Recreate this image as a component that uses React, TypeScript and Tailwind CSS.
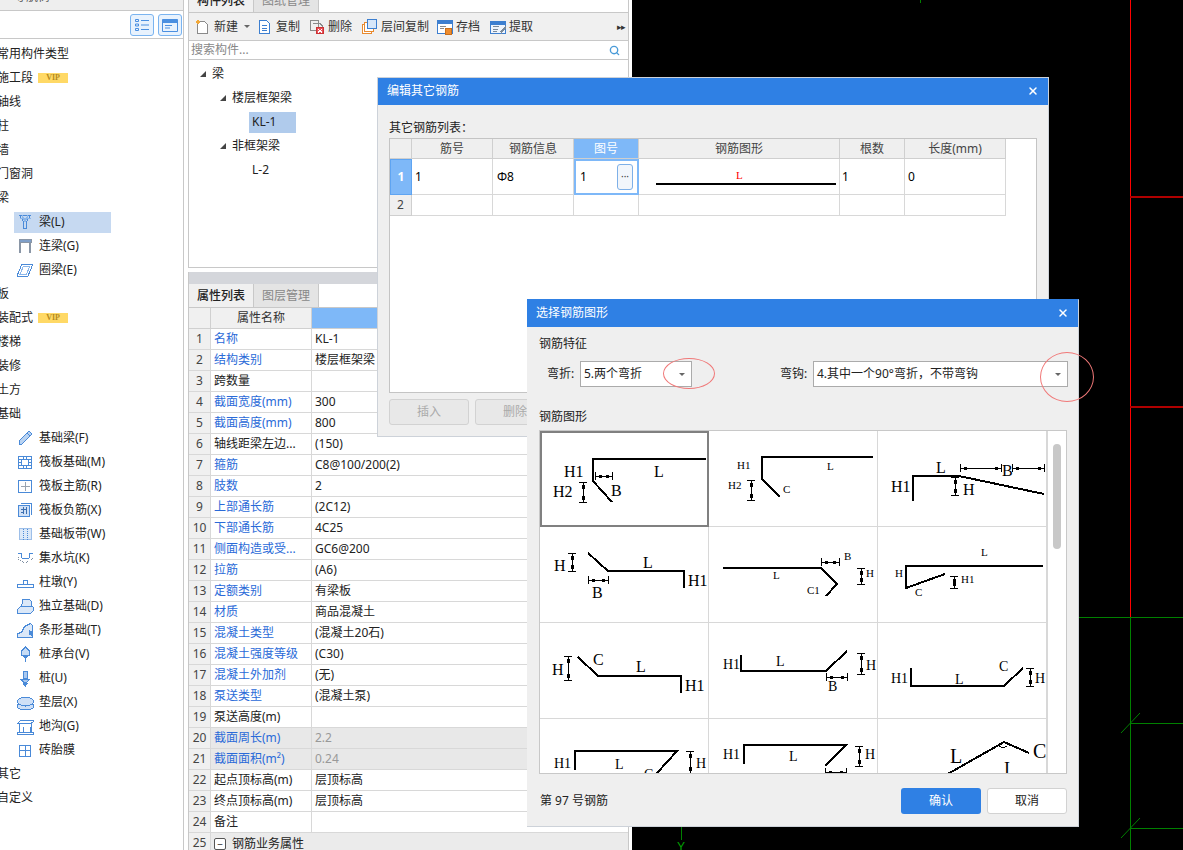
import type { ReactNode } from "react";
import { Search, X } from "lucide-react";

const blue = "#4a8ad8";

// small hand drawn icons for the nav tree
const navIcons: Record<string, ReactNode> = {
  beam: (
    <g fill="none" stroke={blue}>
      <path d="M2.5 1.5h11l-4 6v7h-3v-7z" />
      <path d="M5 1.5l3 6 3-6M2.5 4h11" stroke="#8ab6ea" />
    </g>
  ),
  link: (
    <g fill="none">
      <path d="M2 1h12v3H2z" fill="#7f9fc9" stroke="#8a96a6" />
      <path d="M3 4v11M13 4v11" stroke="#8a96a6" strokeWidth="2" />
    </g>
  ),
  ring: (
    <g fill="none" stroke={blue}>
      <path d="M5 2h11l-5 12H0z" />
      <path d="M6.5 4h6.5l-3.5 8H3z" stroke="#8ab6ea" />
    </g>
  ),
  fbeam: (
    <g fill="#b9d3f2" stroke={blue}>
      <path d="M12 1l3 3-10 10H2v-3z" />
      <path d="M10 3l3 3" />
    </g>
  ),
  raft: (
    <g fill="none" stroke={blue}>
      <path d="M1.5 2.5h13v12h-13z" />
      <path d="M4.5 5.5h7v6h-7z" />
      <path d="M1.5 5.5h3M1.5 8.5h3M1.5 11.5h3M11.5 5.5h3M11.5 8.5h3M11.5 11.5h3M6.5 2.5v3M9.5 2.5v3M6.5 11.5v3M9.5 11.5v3" />
    </g>
  ),
  main: (
    <g fill="none">
      <path d="M1.5 2.5h13v12h-13z" stroke={blue} />
      <path d="M8.5 4v9M4 8.5h9" stroke="#9aa4b0" />
    </g>
  ),
  neg: (
    <g fill="none" stroke={blue}>
      <path d="M3.5 1.5h11v11" />
      <path d="M1.5 3.5h11v11h-11z" fill="#cfe0f6" />
      <path d="M4 7h6M6 5v7M9 5v7M4 10h2" stroke="#3c6fb0" />
    </g>
  ),
  strip: (
    <g fill="#dbe8f8" stroke="#9dbfe9">
      <path d="M2.5 2.5h12v11h-12z" />
      <path d="M6.5 2.5v11M10.5 2.5v11" strokeDasharray="1 1" stroke={blue} />
    </g>
  ),
  pit: (
    <g fill="none" stroke={blue}>
      <path d="M1 3h3l1 5h7l1-5h3" />
      <path d="M1 7c1 7 13 7 15 0" strokeDasharray="1 1" stroke="#7f8fa3" />
    </g>
  ),
  pier: (
    <g fill="none" stroke={blue}>
      <path d="M.5 10.5h16v3H.5z" />
      <path d="M6.5 10.5v-4h4v4" />
    </g>
  ),
  ind: (
    <g fill="#dbe8f8" stroke={blue}>
      <path d="M5.5 1.5h7l2 2v7h-10z" />
      <path d="M.5 11.5l3-3h12l1 1v3l-3 3H.5z" />
    </g>
  ),
  bar: (
    <g fill="#dbe8f8" stroke={blue}>
      <path d="M.5 15.5v-4l4-1 3-6 6-3 2 2v12z" />
      <path d="M12 8l3.5 3v3L12 12z" fill={blue} />
    </g>
  ),
  cap: (
    <g fill="#c7dcf5" stroke={blue}>
      <path d="M8.5 1l4 4v4h-8V5z" />
      <path d="M8.5 9v7M5 9l3.5 3L12 9" fill="none" />
    </g>
  ),
  pile: (
    <g fill="#a9c8ef" stroke={blue}>
      <path d="M6 1.5h4.5v7H6z" />
      <path d="M3.5 9h9.5L10 12H6.5z" />
      <path d="M6 13h4.5l-2.2 3z" fill={blue} />
    </g>
  ),
  pad: (
    <g fill="#cfe0f6" stroke={blue}>
      <path d="M.5 10.5v3c2 3 14 3 16 0v-3z" />
      <ellipse cx="8.5" cy="7.5" rx="8" ry="4.5" />
    </g>
  ),
  ditch: (
    <g fill="none" stroke={blue}>
      <path d="M.5 14.5h16v2H.5z" />
      <path d="M2.5 14.5v-9h12v9M6 14.5v-6M13 14.5v-6" />
      <path d="M.5 5.5l3-3h13v1l-3 2z" />
    </g>
  ),
  brick: (
    <g fill="none" stroke={blue}>
      <path d="M2.5 3.5h11v11h-11z" />
      <path d="M8 3.5v11M2.5 8.5h11" />
    </g>
  ),
};

function Vip() {
  return (
    <span className="ml-[5px] flex h-[10px] w-[30px] items-center justify-center bg-[#ffd966] text-[8px] font-bold text-[#b58a1e] [font-family:'Liberation_Serif',serif]">
      VIP
    </span>
  );
}

const navRows: { label: string; icon?: string; vip?: boolean; active?: boolean }[] = [
  { label: "常用构件类型" },
  { label: "施工段", vip: true },
  { label: "轴线" },
  { label: "柱" },
  { label: "墙" },
  { label: "门窗洞" },
  { label: "梁" },
  { label: "梁(L)", icon: "beam", active: true },
  { label: "连梁(G)", icon: "link" },
  { label: "圈梁(E)", icon: "ring" },
  { label: "板" },
  { label: "装配式", vip: true },
  { label: "楼梯" },
  { label: "装修" },
  { label: "土方" },
  { label: "基础" },
  { label: "基础梁(F)", icon: "fbeam" },
  { label: "筏板基础(M)", icon: "raft" },
  { label: "筏板主筋(R)", icon: "main" },
  { label: "筏板负筋(X)", icon: "neg" },
  { label: "基础板带(W)", icon: "strip" },
  { label: "集水坑(K)", icon: "pit" },
  { label: "柱墩(Y)", icon: "pier" },
  { label: "独立基础(D)", icon: "ind" },
  { label: "条形基础(T)", icon: "bar" },
  { label: "桩承台(V)", icon: "cap" },
  { label: "桩(U)", icon: "pile" },
  { label: "垫层(X)", icon: "pad" },
  { label: "地沟(G)", icon: "ditch" },
  { label: "砖胎膜", icon: "brick" },
  { label: "其它" },
  { label: "自定义" },
];

const props: { label: string; value?: string; link?: boolean; calc?: boolean }[] = [
  { label: "名称", value: "KL-1", link: true },
  { label: "结构类别", value: "楼层框架梁", link: true },
  { label: "跨数量" },
  { label: "截面宽度(mm)", value: "300", link: true },
  { label: "截面高度(mm)", value: "800", link: true },
  { label: "轴线距梁左边...", value: "(150)" },
  { label: "箍筋", value: "C8@100/200(2)", link: true },
  { label: "肢数", value: "2", link: true },
  { label: "上部通长筋", value: "(2C12)", link: true },
  { label: "下部通长筋", value: "4C25", link: true },
  { label: "侧面构造或受...", value: "GC6@200", link: true },
  { label: "拉筋", value: "(A6)", link: true },
  { label: "定额类别", value: "有梁板", link: true },
  { label: "材质", value: "商品混凝土", link: true },
  { label: "混凝土类型", value: "(混凝土20石)", link: true },
  { label: "混凝土强度等级", value: "(C30)", link: true },
  { label: "混凝土外加剂", value: "(无)", link: true },
  { label: "泵送类型", value: "(混凝土泵)", link: true },
  { label: "泵送高度(m)" },
  { label: "截面周长(m)", value: "2.2", link: true, calc: true },
  { label: "截面面积(m²)", value: "0.24", link: true, calc: true },
  { label: "起点顶标高(m)", value: "层顶标高" },
  { label: "终点顶标高(m)", value: "层顶标高" },
  { label: "备注" },
];

const toolbar: { label: string; icon: ReactNode; w: number }[] = [
  {
    label: "复制",
    w: 52,
    icon: (
      <g fill="#fff" stroke="#3d7fd0">
        <path d="M2.5 1.5h7l3 3v10h-10z" />
        <path d="M5 6.5h5M5 9h5M5 11.5h5" />
      </g>
    ),
  },
  {
    label: "删除",
    w: 53,
    icon: (
      <g fill="none">
        <path d="M1.5 1.5h8v10h-8z" stroke="#8a8a8a" />
        <path d="M4 4.5h7l2 2v3" stroke="#8a8a8a" />
        <path d="M7.5 8.5h7v6h-7z" fill="#e8505a" stroke="#c33" />
        <path d="M9 10l4 3.5M13 10l-4 3.5" stroke="#fff" />
      </g>
    ),
  },
  {
    label: "层间复制",
    w: 75,
    icon: (
      <g fill="#fff">
        <path d="M.5 5.5h9v9h-9z" stroke="#e98a2e" />
        <path d="M2.5 3.5h9v9h-9z" stroke="#e98a2e" />
        <path d="M5.5.5h9v9h-9z" fill="#d7e7f9" stroke="#3d7fd0" />
      </g>
    ),
  },
  {
    label: "存档",
    w: 53,
    icon: (
      <g fill="#fff">
        <path d="M.5 1.5h15v13H.5z" stroke="#3d7fd0" />
        <path d="M.5 1.5h15v3H.5z" fill="#3d7fd0" stroke="#3d7fd0" />
        <path d="M3 7h6M3 9.5h4" stroke="#8a8a8a" />
        <path d="M8.5 9.5h6v6h-6z" fill="#ee8c2e" stroke="#c86f1c" />
      </g>
    ),
  },
  {
    label: "提取",
    w: 50,
    icon: (
      <g fill="#eef4fc">
        <path d="M.5 2.5h15v12H.5z" stroke="#3d7fd0" />
        <path d="M.5 2.5h15v2.5H.5z" fill="#3d7fd0" stroke="#3d7fd0" />
        <path d="M3 7.5h6M3 10h5M3 12.5h4" stroke="#7a8a9a" />
        <path d="M10 13l6-7 1.5 1.5-6 7z" fill="#7a8a9a" />
      </g>
    ),
  },
];

type Shape = {
  line: string;
  texts: [string, number, number, number][];
  v?: [number, number, number][];
  h?: [number, number, number][];
  extra?: ReactNode;
};

// coordinates are relative to one cell of the picker grid
const shapes: Shape[] = [
  {
    line: "165,27 52,27 52,49 71,70",
    texts: [["H1", 23, 45, 16], ["L", 113, 45, 16], ["B", 70, 64, 16], ["H2", 12, 65, 16]],
    v: [[42, 50, 70]],
    h: [[44, 54, 71]],
  },
  {
    line: "164,26 53,26 53,48 71,66",
    texts: [["H1", 28, 38, 11], ["H2", 19, 58, 11], ["C", 74, 62, 11], ["L", 118, 39, 11]],
    v: [[42, 49, 69]],
  },
  {
    line: "35,70 35,45 81,45 166,63",
    texts: [["H1", 13, 61, 16], ["L", 58, 42, 16], ["B", 124, 45, 16], ["H", 85, 64, 16]],
    v: [[77, 46, 64]],
    h: [[37, 82, 123], [37, 134, 166]],
  },
  {
    line: "48,26 68,44 144,44 144,61",
    texts: [["H1", 148, 59, 16], ["L", 103, 41, 16], ["H", 14, 44, 16], ["B", 52, 71, 16]],
    v: [[32, 26, 44]],
    h: [[53, 48, 68]],
  },
  {
    line: "14,41 112,41 128,57 117,69",
    texts: [["L", 64, 52, 11], ["C1", 98, 67, 11], ["B", 135, 33, 11], ["H", 157, 50, 11]],
    v: [[152, 41, 57]],
    h: [[35, 112, 130]],
  },
  {
    line: "165,39 28,39 28,61 67,47",
    texts: [["L", 103, 29, 11], ["H", 17, 50, 11], ["C", 37, 69, 11], ["H1", 83, 56, 11]],
    v: [[76, 49, 61]],
  },
  {
    line: "38,34 58,53 141,53 141,70",
    texts: [["H", 12, 52, 16], ["C", 53, 42, 16], ["L", 96, 49, 16], ["H1", 145, 68, 16]],
    v: [[28, 33, 57]],
  },
  {
    line: "32,32 32,48 117,48 138,28",
    texts: [["H1", 14, 46, 14], ["L", 67, 43, 14], ["B", 119, 68, 14], ["H", 157, 47, 14]],
    v: [[152, 30, 51]],
    h: [[54, 117, 138]],
  },
  {
    line: "33,45 33,63 126,63 145,45",
    texts: [["H1", 13, 60, 14], ["L", 77, 61, 14], ["C", 121, 48, 14], ["H", 157, 60, 14]],
    v: [[152, 45, 63]],
  },
  {
    line: "35,51 35,32 137,32 117,54",
    texts: [["H1", 14, 49, 14], ["L", 75, 50, 14], ["C", 104, 60, 14], ["H", 156, 49, 14]],
    v: [[150, 32, 54]],
  },
  {
    line: "35,45 35,26 137,26 116,47",
    texts: [["H1", 14, 40, 14], ["L", 80, 42, 14], ["H", 156, 40, 14]],
    v: [[150, 27, 47]],
    h: [[53, 116, 137]],
  },
  {
    line: "68,56 126,23 151,34",
    texts: [["L", 72, 44, 20], ["C", 155, 39, 20], ["I", 126, 56, 18]],
    extra: <path d="M120 26c2 3 6 3 9 1" fill="none" stroke="#000" />,
  },
];

function ShapeCell({ shape }: { shape: Shape }) {
  return (
    <svg width="168" height="95" className="block" shapeRendering="crispEdges">
      <polyline points={shape.line} fill="none" stroke="#000" strokeWidth="2" />
      {shape.v?.map(([x, a, b]) => (
        <g key={`v${x}${a}`} stroke="#000">
          <path d={`M${x} ${a}V${b}M${x - 4} ${a}h8M${x - 4} ${b}h8`} fill="none" />
          <rect x={x - 1} y={a + 3} width="2" height="3" fill="#000" />
          <rect x={x - 1} y={b - 6} width="2" height="3" fill="#000" />
        </g>
      ))}
      {shape.h?.map(([y, a, b]) => (
        <g key={`h${y}${a}`} stroke="#000">
          <path d={`M${a} ${y}H${b}M${a} ${y - 4}v8M${b} ${y - 4}v8`} fill="none" />
          <rect x={a + 4} y={y - 1} width="2" height="2" fill="#000" />
          <rect x={b - 6} y={y - 1} width="2" height="2" fill="#000" />
        </g>
      ))}
      {shape.extra}
      {shape.texts.map(([t, x, y, size]) => (
        <text key={t + x} x={x} y={y} fontSize={size} fontFamily="'Liberation Serif', serif" fill="#000">
          {t}
        </text>
      ))}
    </svg>
  );
}

function TitleBar({ title }: { title: string }) {
  return (
    <div className="flex h-[27px] shrink-0 items-center justify-between bg-[#2f80e4] pb-[2px] pl-[9px] pr-[9px] text-white">
      <span>{title}</span>
      <X size={12} strokeWidth={3} />
    </div>
  );
}

function Caret() {
  return <span className="h-0 w-0 border-x-[3px] border-t-[3px] border-x-transparent border-t-[#666]" />;
}

function TreeArrow() {
  return (
    <svg width="6" height="6" className="shrink-0">
      <path d="M6 0v6H0z" fill="#444" />
    </svg>
  );
}

const rebarCols = "grid-cols-[22px_81px_81px_65px_201px_65px_101px]";

function EditRebarDialog() {
  const heads = ["筋号", "钢筋信息", "图号", "钢筋图形", "根数", "长度(mm)"];
  return (
    <div className="absolute left-[377px] top-[77px] flex h-[360px] w-[672px] flex-col border border-[#cdd2d9] bg-[#efefef]">
      <TitleBar title="编辑其它钢筋" />
      <div className="flex h-[33px] shrink-0 items-center pl-[11px] pt-[13px] text-[#222]">其它钢筋列表：</div>
      <div className="mx-[11px] h-[255px] border border-[#c4c4c4] bg-white">
        <div className={`grid w-[617px] ${rebarCols} grid-rows-[20px_36px_21px]`}>
          <div className="border-b border-r border-[#cfcfcf] bg-[#efefef]" />
          {heads.map((h, i) => (
            <div
              key={h}
              className={`flex items-center justify-center border-b border-r border-[#cfcfcf] ${i === 2 ? "bg-[#7eb8f8] text-white" : "bg-[#efefef] text-[#444]"}`}
            >
              {h}
            </div>
          ))}
          <div className="flex items-center justify-center border border-[#5ea4f2] bg-[#7eb8f8] font-bold text-white">1</div>
          <div className="flex items-center border-b border-r border-[#d8d8d8] pl-[3px]">1</div>
          <div className="flex items-center border-b border-r border-[#d8d8d8] pl-[4px]">Φ8</div>
          <div className="flex items-center justify-between border-2 border-[#7eb8f8] pl-[4px] pr-[4px]">
            <span>1</span>
            <span className="flex h-[26px] w-[16px] items-center justify-center rounded-[3px] border border-[#7eb0e8] bg-[#f2f6fb] pb-[2px] text-[10px] leading-none text-[#444]">
              ···
            </span>
          </div>
          <div className="relative flex items-center justify-center border-b border-r border-[#d8d8d8]">
            <svg width="201" height="36" className="block">
              <text x="97" y="20" fontSize="11" fill="#f00" fontFamily="'Liberation Serif', serif">
                L
              </text>
              <path d="M17 25H197" stroke="#000" strokeWidth="2" shapeRendering="crispEdges" />
            </svg>
          </div>
          <div className="flex items-center border-b border-r border-[#d8d8d8] pl-[2px]">1</div>
          <div className="flex items-center border-b border-r border-[#d8d8d8] pl-[3px]">0</div>
          <div className="flex items-center justify-center border-b border-r border-[#cfcfcf] bg-[#efefef] text-[#444]">2</div>
          {heads.map((h) => (
            <div key={h} className="border-b border-r border-[#d8d8d8]" />
          ))}
        </div>
      </div>
      <div className="flex gap-[6px] pl-[11px] pt-[6px]">
        {["插入", "删除"].map((b) => (
          <div key={b} className="flex h-[26px] w-[80px] items-center justify-center rounded-[3px] border border-[#d2d2d2] bg-[#e8e8e8] text-[#aaa]">
            {b}
          </div>
        ))}
      </div>
    </div>
  );
}

function Select({ value, width }: { value: string; width: number }) {
  return (
    <div
      className="flex h-[26px] items-center justify-between border border-[#ababab] bg-white pl-[3px] pr-[6px] text-[#222]"
      style={{ width }}
    >
      <span>{value}</span>
      <Caret />
    </div>
  );
}

function ShapeDialog() {
  return (
    <div className="absolute left-[527px] top-[299px] flex h-[528px] w-[552px] flex-col border-b border-r border-t border-[#cdd2d9] border-t-[#2f80e4] bg-[#efefef]">
      <TitleBar title="选择钢筋图形" />
      <div className="pl-[12px] pt-[8px] text-[#222] leading-[18px]">钢筋特征</div>
      <div className="mt-[8px] flex items-center pl-[20px] text-[#222]">
        <span className="w-[33px] whitespace-nowrap">弯折:</span>
        <Select value="5.两个弯折" width={112} />
        <span className="ml-[88px] w-[33px] whitespace-nowrap">弯钩:</span>
        <Select value="4.其中一个90°弯折，不带弯钩" width={255} />
      </div>
      <div className="mt-[21px] pl-[12px] text-[#222] leading-[18px]">钢筋图形</div>
      <div className="ml-[12px] mt-[4px] flex h-[344px] w-[528px] overflow-hidden border border-[#c8c8c8] bg-white">
        <div className="grid w-[507px] grid-cols-3 content-start">
          {shapes.map((s, i) => (
            <div
              key={s.line}
              className={`h-[96px] ${i === 0 ? "border-2 border-[#808080]" : "border-b border-r border-[#d8d8d8]"}`}
            >
              <div className={i === 0 ? "-m-[1px]" : ""}>
                <ShapeCell shape={s} />
              </div>
            </div>
          ))}
        </div>
        <div className="flex flex-1 justify-center border-l border-[#d8d8d8] pt-[13px]">
          <div className="h-[105px] w-[8px] rounded-[4px] bg-[#c8c8c8]" />
        </div>
      </div>
      <div className="flex items-center justify-between pl-[13px] pr-[11px] pt-[14px] text-[#222]">
        <span>第 97 号钢筋</span>
        <div className="flex gap-[6px]">
          <div className="flex h-[26px] w-[80px] items-center justify-center rounded-[3px] bg-[#2f80e4] text-white">确认</div>
          <div className="flex h-[26px] w-[80px] items-center justify-center rounded-[3px] border border-[#d2d2d2] bg-white">取消</div>
        </div>
      </div>
    </div>
  );
}

function NavPanel() {
  return (
    <aside className="flex w-[188px] shrink-0 flex-col overflow-hidden">
      <div className="mr-[4px] h-[11px] shrink-0 overflow-hidden border-b border-r border-[#c8c8c8] bg-[#eeeeee]">
        <div className="-mt-[12px] pl-[14px] text-[#555]">导航树</div>
      </div>
      <div className="mr-[4px] flex h-[28px] shrink-0 items-center justify-end gap-[4px] border-b border-r border-[#c8c8c8] pr-[1px]">
        <span className="flex h-[22px] w-[24px] items-center justify-center rounded-[3px] border border-[#7ab4f0] bg-[#e8f2fd]">
          <svg width="14" height="14" fill="none" stroke="#4a8fe0">
            <path d="M.5 1.5h3v2h-3zM.5 6h3v2h-3zM.5 10.5h3v2h-3zM6 2.5h8M6 7h8M6 11.5h8" />
          </svg>
        </span>
        <span className="flex h-[22px] w-[24px] items-center justify-center rounded-[3px] border border-[#7ab4f0] bg-[#e8f2fd]">
          <svg width="16" height="14" fill="none" stroke="#4a8fe0">
            <path d="M.5 3h15v10.5H.5z" />
            <path d="M.5 1.5h15v3H.5z" fill="#4a8fe0" />
            <path d="M3 7.5h7M3 10h5" />
          </svg>
        </span>
      </div>
      <div className="mr-[4px] flex-1 border-r border-[#c8c8c8] pt-[3px] text-[#222]">
        {navRows.map((r) =>
          r.icon ? (
            <div key={r.label} className="flex h-[24px] items-center">
              <div className={`ml-[14px] flex h-[21px] w-[97px] items-center pl-[3px] ${r.active ? "bg-[#c6d9f1]" : ""}`}>
                <svg width="17" height="17" className="mr-[5px] shrink-0" shapeRendering="crispEdges">
                  {navIcons[r.icon]}
                </svg>
                <span className="whitespace-nowrap">{r.label}</span>
              </div>
            </div>
          ) : (
            <div key={r.label} className="flex h-[24px] items-center whitespace-nowrap -ml-[3px]">
              {r.label}
              {r.vip && <Vip />}
            </div>
          )
        )}
      </div>
    </aside>
  );
}

function Tab({ label, active }: { label: string; active?: boolean }) {
  return (
    <div
      className={`flex w-[65px] items-center justify-center border-r border-[#c8c8c8] ${active ? "bg-[#f0f0f0] font-medium text-[#222]" : "bg-[#e4e4e4] text-[#888]"}`}
    >
      {label}
    </div>
  );
}

function MemberPanel() {
  return (
    <section className="flex w-[444px] shrink-0 flex-col overflow-hidden pr-[3px]">
      <div className="flex h-[268px] shrink-0 flex-col border-x border-b border-[#c8c8c8]">
        <div className="-mt-[11px] flex h-[23px] shrink-0 bg-white">
          <Tab label="构件列表" active />
          <Tab label="图纸管理" />
        </div>
        <div className="flex h-[29px] shrink-0 items-center border-y border-[#c8c8c8] bg-[#f0f0f0] pl-[6px] pr-[3px] text-[#333]">
          <svg width="15" height="16" className="mr-[4px] shrink-0" shapeRendering="crispEdges">
            <path d="M2.5 2.5h7l3 3v9h-10z" fill="#fff" stroke="#8a8a8a" />
            <path d="M3 0l1 2 2 1-2 1-1 2-1-2-2-1 2-1z" fill="#f2a93b" />
          </svg>
          <span>新建</span>
          <span className="ml-[6px] mr-[7px] flex">
            <Caret />
          </span>
          {toolbar.map((t) => (
            <div key={t.label} className="flex items-center" style={{ width: t.w }}>
              <svg width="16" height="16" className="mr-[3px] shrink-0" shapeRendering="crispEdges">
                {t.icon}
              </svg>
              <span>{t.label}</span>
            </div>
          ))}
          <span className="ml-auto text-[9px] tracking-[-1px] text-[#333]">▸▸</span>
        </div>
        <div className="flex h-[19px] shrink-0 items-center justify-between border-b border-[#c8c8c8] bg-white pl-[2px] pr-[8px] text-[#888]">
          <span>搜索构件...</span>
          <Search size={11} strokeWidth={3} color="#4a9bd8" />
        </div>
        <div className="flex-1 bg-white pt-[2px] text-[#222]">
          <div className="flex h-[24px] items-center gap-[6px] pl-[11px]">
            <TreeArrow />
            梁
          </div>
          <div className="flex h-[24px] items-center gap-[6px] pl-[31px]">
            <TreeArrow />
            楼层框架梁
          </div>
          <div className="flex h-[24px] items-center pl-[60px]">
            <span className="flex h-[21px] w-[47px] items-center bg-[#b0cbec] pl-[3px]">KL-1</span>
          </div>
          <div className="flex h-[24px] items-center gap-[6px] pl-[31px]">
            <TreeArrow />
            非框架梁
          </div>
          <div className="flex h-[24px] items-center pl-[63px]">L-2</div>
        </div>
      </div>
      <div className="mt-[4px] h-[12px] shrink-0 border-x border-[#c8c8c8] bg-[#d4d6db]" />
      <div className="flex h-[23px] shrink-0 border-x border-[#c8c8c8] bg-white">
        <Tab label="属性列表" active />
        <Tab label="图层管理" />
      </div>
      <div className="grid flex-1 grid-cols-[22px_101px_1fr] auto-rows-[21px] border-x border-t border-[#c8c8c8] bg-white">
        <div className="border-b border-r border-[#d0d0d0] bg-[#f0f0f0]" />
        <div className="flex items-center justify-center border-b border-r border-[#d0d0d0] bg-[#f0f0f0] text-[#333]">属性名称</div>
        <div className="border-b border-[#d0d0d0] bg-[#7eb8f8]" />
        {props.map((p, i) => (
          <div key={p.label} className="contents">
            <div className="flex items-center justify-center border-b border-r border-[#d8d8d8] bg-[#f0f0f0] text-[#444]">{i + 1}</div>
            <div className={`flex items-center overflow-hidden whitespace-nowrap border-b border-r border-[#d8d8d8] pl-[3px] ${p.link ? "text-[#2a6ad8]" : "text-[#222]"} ${p.calc ? "bg-[#e8e8e8]" : ""}`}>
              {p.label}
            </div>
            <div className={`flex items-center border-b border-[#d8d8d8] pl-[3px] ${p.calc ? "bg-[#e8e8e8] text-[#999]" : "text-[#222]"}`}>
              {p.value}
            </div>
          </div>
        ))}
        <div className="flex items-center justify-center border-b border-r border-[#d8d8d8] bg-[#f0f0f0] text-[#444]">25</div>
        <div className="col-span-2 flex items-center whitespace-nowrap bg-[#ebebeb] text-[#222]">
          <span className="ml-[3px] mr-[6px] flex h-[12px] w-[12px] items-center justify-center rounded-[2px] border border-[#555] bg-white text-[10px] leading-none">
            −
          </span>
          钢筋业务属性
        </div>
      </div>
    </section>
  );
}

// the model view behind the dialogs
function Canvas() {
  return (
    <div className="flex-1 overflow-hidden bg-black">
      <svg width="551" height="850" className="block" shapeRendering="crispEdges">
        <path d="M498 0V618" stroke="#f00" />
        <path d="M498 197H551M498 407H551" stroke="#b00000" strokeWidth="1.5" />
        <path d="M498 618V850M447 617H551M498 723H551M498 828H551M288 0V3M49 827V840" stroke="#008000" />
        <path d="M489 733L508 713M489 838L508 818" stroke="#008000" shapeRendering="auto" />
        <text x="45" y="851" fontSize="12" fill="#00a000" fontFamily="'Liberation Sans', sans-serif">
          Y
        </text>
      </svg>
    </div>
  );
}

export default function App() {
  return (
    <div className="relative flex h-[850px] w-[1183px] overflow-hidden bg-white text-[12px] [font-family:'Noto_Sans','Noto_Sans_CJK_SC',sans-serif]">
      <NavPanel />
      <MemberPanel />
      <Canvas />
      <EditRebarDialog />
      <ShapeDialog />
      {/* red hand drawn marks over the two dropdowns */}
      <div className="absolute left-[663px] top-[358px] h-[31px] w-[52px] rounded-[50%] border border-[#f07878]" />
      <div className="absolute left-[1040px] top-[352px] h-[50px] w-[54px] rounded-[50%] border border-[#f07878]" />
    </div>
  );
}
